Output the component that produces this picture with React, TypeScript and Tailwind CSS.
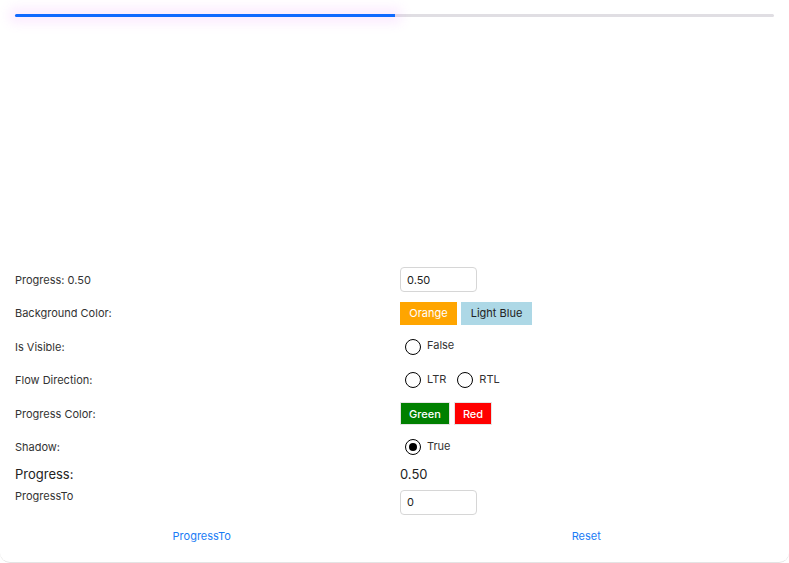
import React from "react";

const font = { fontFamily: "Inter, 'Noto Sans', sans-serif" };

function Radio({ checked, label }: { checked?: boolean; label: string }) {
  return (
    <div className="flex items-center gap-[6px]">
      <span className="w-[16px] h-[16px] rounded-full border-[1.5px] border-black flex items-center justify-center bg-white">
        {checked && <span className="w-[8px] h-[8px] rounded-full bg-black" />}
      </span>
      <span className="text-[11px] text-[#333] -mt-[3px]">{label}</span>
    </div>
  );
}

function Row({ label, children }: { label: string; children: React.ReactNode }) {
  return (
    <div className="grid grid-cols-[385px_1fr] h-[33.5px] items-center">
      <span className="text-[11px] text-[#333]">{label}</span>
      <div className="flex items-center">{children}</div>
    </div>
  );
}

export default function App() {
  return (
    <div
      style={font}
      className="w-[789px] h-[563px] bg-white rounded-b-[10px] border-b border-[#e4e4e4] overflow-hidden flex flex-col px-[15px]"
    >
      <div className="mt-[14px] h-[3px] w-full rounded-full bg-[#e0dee3] flex">
        <div className="w-1/2 h-full rounded-l-full bg-[#0f6bff] shadow-[0_0_12px_6px_rgba(225,110,255,0.14)]" />
      </div>

      <div className="mt-[246px] flex flex-col">
        <Row label="Progress: 0.50">
          <div className="w-[77px] h-[25px] border border-[#d6d6d6] rounded-[4px] flex items-center px-[6px] text-[11px] text-[#222]">
            0.50
          </div>
        </Row>
        <Row label="Background Color:">
          <div className="flex gap-[4px]">
            <div className="w-[57px] h-[23px] bg-[#ffa500] text-white text-[11px] flex items-center justify-center">
              Orange
            </div>
            <div className="w-[71px] h-[23px] bg-[#add8e6] text-[#222] text-[11px] flex items-center justify-center">
              Light Blue
            </div>
          </div>
        </Row>
        <Row label="Is Visible:">
          <div className="pl-[5px]">
            <Radio label="False" />
          </div>
        </Row>
        <Row label="Flow Direction:">
          <div className="pl-[5px] flex gap-[11px]">
            <Radio label="LTR" />
            <Radio label="RTL" />
          </div>
        </Row>
        <Row label="Progress Color:">
          <div className="flex gap-[4px]">
            <div className="w-[50px] h-[23px] bg-[#008000] text-white text-[11px] font-medium flex items-center justify-center border border-[#e5e5e5]">
              Green
            </div>
            <div className="w-[38px] h-[23px] bg-[#ff0000] text-white text-[11px] font-medium flex items-center justify-center border border-[#e5e5e5]">
              Red
            </div>
          </div>
        </Row>
        <Row label="Shadow:">
          <div className="pl-[5px]">
            <Radio checked label="True" />
          </div>
        </Row>

        <div className="grid grid-cols-[385px_1fr] h-[22px] items-center">
          <span className="text-[13px] text-[#222]">Progress:</span>
          <span className="text-[13px] text-[#222]">0.50</span>
        </div>

        <div className="grid grid-cols-[385px_1fr] mt-[4px] items-start">
          <span className="text-[11px] text-[#333] leading-[13px]">ProgressTo</span>
          <div className="w-[77px] h-[25px] border border-[#d6d6d6] rounded-[4px] flex items-center px-[6px] text-[11px] text-[#222]">
            0
          </div>
        </div>

        <div className="grid grid-cols-2 mt-[10px] h-[22px] items-center">
          <span className="text-center text-[11px] text-[#1a7cf5] pr-[6px]">ProgressTo</span>
          <span className="text-center text-[11px] text-[#1a7cf5] pl-[4px]">Reset</span>
        </div>
      </div>
    </div>
  );
}
